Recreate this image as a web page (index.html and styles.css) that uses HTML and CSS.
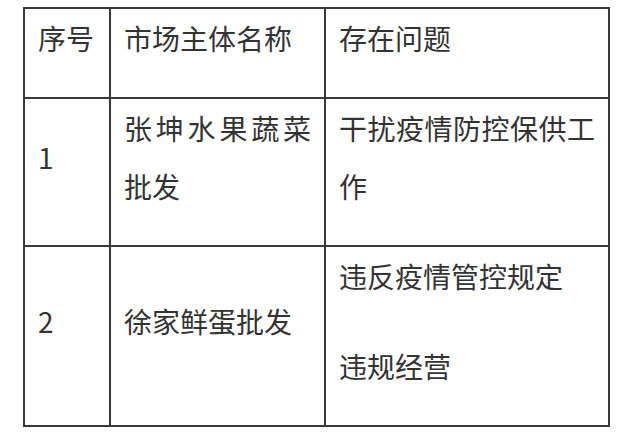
FILE: index.html
```html
<!DOCTYPE html>
<html lang="zh-CN">
<head>
<meta charset="utf-8">
<title>市场主体问题</title>
<link rel="stylesheet" href="styles.css">
</head>
<body>
<div class="grid" role="table">
  <div class="cell num" role="cell"><p>序号</p></div>
  <div class="cell" role="cell"><p>市场主体名称</p></div>
  <div class="cell" role="cell"><p>存在问题</p></div>

  <div class="cell num" role="cell"><p>1</p></div>
  <div class="cell" role="cell"><p>张坤水果蔬菜批发</p></div>
  <div class="cell" role="cell"><p>干扰疫情防控保供工作</p></div>

  <div class="cell num center" role="cell"><p>2</p></div>
  <div class="cell center" role="cell"><p>徐家鲜蛋批发</p></div>
  <div class="cell" role="cell"><p>违反疫情管控规定</p><p>违规经营</p></div>
</div>
</body>
</html>
```
FILE: styles.css
```css
html, body {
  margin: 0;
  padding: 0;
  background: #ffffff;
}
body {
  padding: 7px 0 0 23px;
  font-family: "Noto Sans CJK SC", "Noto Sans", sans-serif;
  font-size: 28px;
  color: #333333;
}
.grid {
  display: grid;
  grid-template-columns: 86px 215px 284px;
  width: max-content;
  border-top: 2px solid #383838;
  border-left: 2px solid #383838;
}
.cell {
  box-sizing: border-box;
  border-right: 2px solid #383838;
  border-bottom: 2px solid #383838;
  padding: 0 13px 30px;
  display: flex;
  flex-direction: column;
  justify-content: center;
}
.cell p {
  margin: 0;
  line-height: 58px;
  text-align: justify;
}
.cell p + p {
  margin-top: 32px;
}
```
